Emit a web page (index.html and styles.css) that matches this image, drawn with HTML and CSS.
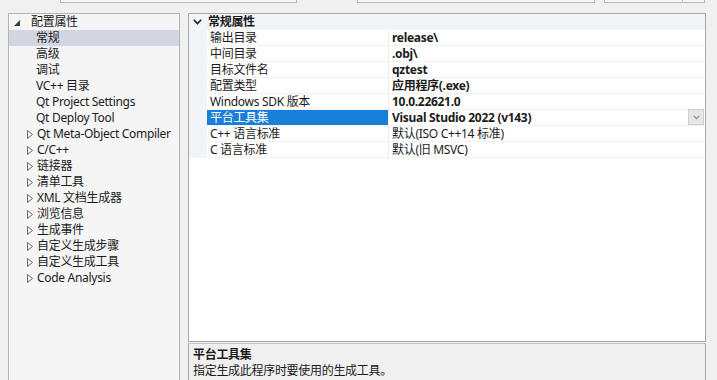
FILE: index.html
```html
<!DOCTYPE html>
<html lang="zh-CN">
<head>
<meta charset="utf-8">
<title>配置属性</title>
<link rel="stylesheet" href="styles.css">
</head>
<body>
<div class="topbar">
  <div class="combo c1"></div>
  <div class="combo c2"></div>
  <div class="combo c3"><span class="seg"></span></div>
</div>
<div class="main">
  <div class="tree">
    <div class="node root"><svg class="tri" width="6" height="6" viewBox="0 0 6 6"><polygon points="6,0 6,6 0,6" fill="#3c3c3c"/></svg><span>配置属性</span></div>
    <div class="node child sel">常规</div>
    <div class="node child">高级</div>
    <div class="node child">调试</div>
    <div class="node child">VC++ 目录</div>
    <div class="node child">Qt Project Settings</div>
    <div class="node child">Qt Deploy Tool</div>
    <div class="node coll"><svg class="tri2" width="6" height="9" viewBox="0 0 6 9"><polygon points="0.5,0.5 5.5,4.5 0.5,8.5" fill="none" stroke="#6a6a6a"/></svg><span>Qt Meta-Object Compiler</span></div>
    <div class="node coll"><svg class="tri2" width="6" height="9" viewBox="0 0 6 9"><polygon points="0.5,0.5 5.5,4.5 0.5,8.5" fill="none" stroke="#6a6a6a"/></svg><span>C/C++</span></div>
    <div class="node coll"><svg class="tri2" width="6" height="9" viewBox="0 0 6 9"><polygon points="0.5,0.5 5.5,4.5 0.5,8.5" fill="none" stroke="#6a6a6a"/></svg><span>链接器</span></div>
    <div class="node coll"><svg class="tri2" width="6" height="9" viewBox="0 0 6 9"><polygon points="0.5,0.5 5.5,4.5 0.5,8.5" fill="none" stroke="#6a6a6a"/></svg><span>清单工具</span></div>
    <div class="node coll"><svg class="tri2" width="6" height="9" viewBox="0 0 6 9"><polygon points="0.5,0.5 5.5,4.5 0.5,8.5" fill="none" stroke="#6a6a6a"/></svg><span>XML 文档生成器</span></div>
    <div class="node coll"><svg class="tri2" width="6" height="9" viewBox="0 0 6 9"><polygon points="0.5,0.5 5.5,4.5 0.5,8.5" fill="none" stroke="#6a6a6a"/></svg><span>浏览信息</span></div>
    <div class="node coll"><svg class="tri2" width="6" height="9" viewBox="0 0 6 9"><polygon points="0.5,0.5 5.5,4.5 0.5,8.5" fill="none" stroke="#6a6a6a"/></svg><span>生成事件</span></div>
    <div class="node coll"><svg class="tri2" width="6" height="9" viewBox="0 0 6 9"><polygon points="0.5,0.5 5.5,4.5 0.5,8.5" fill="none" stroke="#6a6a6a"/></svg><span>自定义生成步骤</span></div>
    <div class="node coll"><svg class="tri2" width="6" height="9" viewBox="0 0 6 9"><polygon points="0.5,0.5 5.5,4.5 0.5,8.5" fill="none" stroke="#6a6a6a"/></svg><span>自定义生成工具</span></div>
    <div class="node coll"><svg class="tri2" width="6" height="9" viewBox="0 0 6 9"><polygon points="0.5,0.5 5.5,4.5 0.5,8.5" fill="none" stroke="#6a6a6a"/></svg><span>Code Analysis</span></div>
  </div>
  <div class="right">
    <div class="grid">
      <div class="cat"><span class="chev"><svg width="9" height="6" viewBox="0 0 9 6"><polyline points="0.8,0.8 4.5,4.6 8.2,0.8" fill="none" stroke="#1e1e1e" stroke-width="1.6"/></svg></span><span class="catname">常规属性</span></div>
      <div class="row"><span class="gut"></span><span class="name">输出目录</span><span class="val b">release\</span></div>
      <div class="row"><span class="gut"></span><span class="name">中间目录</span><span class="val b">.obj\</span></div>
      <div class="row"><span class="gut"></span><span class="name">目标文件名</span><span class="val b">qztest</span></div>
      <div class="row"><span class="gut"></span><span class="name">配置类型</span><span class="val b">应用程序(.exe)</span></div>
      <div class="row"><span class="gut"></span><span class="name">Windows SDK 版本</span><span class="val b">10.0.22621.0</span></div>
      <div class="row active"><span class="gut"></span><span class="name">平台工具集</span><span class="val b">Visual Studio 2022 (v143)<span class="dd"><svg width="7" height="5" viewBox="0 0 7 5"><polyline points="0.8,0.8 3.5,3.6 6.2,0.8" fill="none" stroke="#8a8a8a" stroke-width="1.1"/></svg></span></span></div>
      <div class="row"><span class="gut"></span><span class="name">C++ 语言标准</span><span class="val">默认(ISO C++14 标准)</span></div>
      <div class="row"><span class="gut"></span><span class="name">C 语言标准</span><span class="val">默认(旧 MSVC)</span></div>
    </div>
    <div class="desc">
      <div class="dtitle">平台工具集</div>
      <div class="dtext">指定生成此程序时要使用的生成工具。</div>
    </div>
  </div>
</div>
</body>
</html>
```
FILE: styles.css
```css
* { box-sizing: border-box; }
html, body { margin: 0; padding: 0; }
body {
  width: 717px;
  height: 380px;
  overflow: hidden;
  background: #f0f0f0;
  color: #1b1b1b;
  font-family: "Noto Sans", "Noto Sans CJK SC", sans-serif;
  font-size: 12px;
  line-height: 16px;
  letter-spacing: -0.3px;
}
.topbar {
  height: 13px;
  display: flex;
  align-items: flex-start;
}
.combo {
  height: 3px;
  border: 1px solid #b9b9b9;
  border-top: none;
  background: #f6f6f6;
}
.c1 { margin-left: 60px; width: 237px; }
.c2 { margin-left: 60px; width: 238px; }
.c3 { margin-left: 9px; width: 101px; position: relative; }
.c3 .seg { position: absolute; left: 77px; top: 0; height: 3px; border-left: 1px solid #c8c8c8; }

.main {
  display: flex;
  gap: 8px;
  padding-left: 8px;
  height: 367px;
}
.tree {
  width: 172px;
  height: 380px;
  flex: none;
  border: 1px solid #b4b4b4;
  background: #f5f5f5;
}
.node {
  height: 16px;
  white-space: nowrap;
  display: flex;
  align-items: center;
}
.root { padding-left: 5px; }
.root .tri { margin-right: 11px; margin-top: 1px; }
.child { padding-left: 27px; }
.coll { padding-left: 18px; }
.coll .tri2 { margin-right: 4px; }
.sel { background: #d2d6e3; }

.right {
  width: 518px;
  flex: none;
  display: flex;
  flex-direction: column;
}
.grid {
  flex: none;
  height: 329px;
  border: 1px solid #a9a9a9;
  background: #ffffff;
}
.cat {
  height: 16px;
  display: flex;
  align-items: center;
  background: #f1f5fa;
  font-weight: bold;
}
.chev { width: 18px; flex: none; display: flex; justify-content: flex-start; padding-left: 4px; }
.catname { padding-left: 1px; }
.row {
  height: 16px;
  display: flex;
  white-space: nowrap;
}
.gut { width: 18px; background: #f1f5fa; flex: none; }
.name {
  width: 182px;
  flex: none;
  padding-left: 3px;
  border-bottom: 1px solid #f2f2f2;
  border-right: 1px solid #ececec;
}
.val {
  flex: 1;
  padding-left: 3px;
  border-bottom: 1px solid #f2f2f2;
  position: relative;
}
.b { font-weight: bold; }
.active .name { background: #1a7fd9; color: #ffffff; }
.dd {
  position: absolute;
  right: 1px;
  top: -1px;
  width: 16px;
  height: 16px;
  background: #e6e6e6;
  border: 1px solid #cfcfcf;
  display: flex;
  align-items: center;
  justify-content: center;
}
.desc {
  flex: none;
  margin-top: 1px;
  height: 40px;
  border-top: 1px solid #c4c4c4;
  border-left: 1px solid #a9a9a9;
  border-right: 1px solid #a9a9a9;
  padding: 3px 0 0 4px;
}
.dtitle { font-weight: bold; height: 16px; }
.dtext { height: 16px; }
```
